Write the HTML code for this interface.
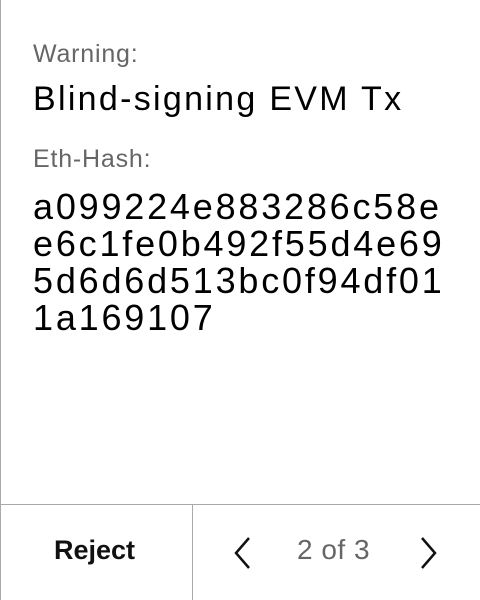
<!DOCTYPE html>
<html><head><style>
body{margin:0;width:480px;height:600px;background:#fff;position:relative;overflow:hidden;font-family:"Liberation Sans",sans-serif;}
.lb{position:absolute;left:0;top:0;width:1px;height:600px;background:#aaa;}
.t{position:absolute;left:33px;white-space:nowrap;}
.lab{font-size:25px;color:#666;letter-spacing:0.8px;}
.hl{position:absolute;left:0;right:0;top:504px;height:1px;background:#aaa;}
.vl{position:absolute;left:192px;top:504px;width:1px;height:96px;background:#aaa;}
</style></head><body>
<div class="lb"></div>
<div class="t lab" style="top:40px">Warning:</div>
<div class="t" style="top:80px;font-size:34px;color:#000;letter-spacing:2.3px">Blind-signing EVM Tx</div>
<div class="t lab" style="top:145px">Eth-Hash:</div>
<div class="t" style="top:188px;font-size:36px;line-height:37px;letter-spacing:2.8px;color:#000">a099224e883286c58e<br>e6c1fe0b492f55d4e69<br>5d6d6d513bc0f94df01<br>1a169107</div>
<div class="hl"></div><div class="vl"></div>
<div class="t" style="left:54px;top:535px;font-size:27px;font-weight:bold;color:#111">Reject</div>
<svg style="position:absolute;left:232px;top:536px" width="22" height="34"><path d="M17 2 L4 17 L17 32" stroke="#111" stroke-width="2.5" fill="none"/></svg>
<div class="t" style="left:297px;top:534px;font-size:28px;color:#666;letter-spacing:0.5px">2 of 3</div>
<svg style="position:absolute;left:418px;top:536px" width="22" height="34"><path d="M4 2 L17 17 L4 32" stroke="#111" stroke-width="2.5" fill="none"/></svg>
</body></html>
